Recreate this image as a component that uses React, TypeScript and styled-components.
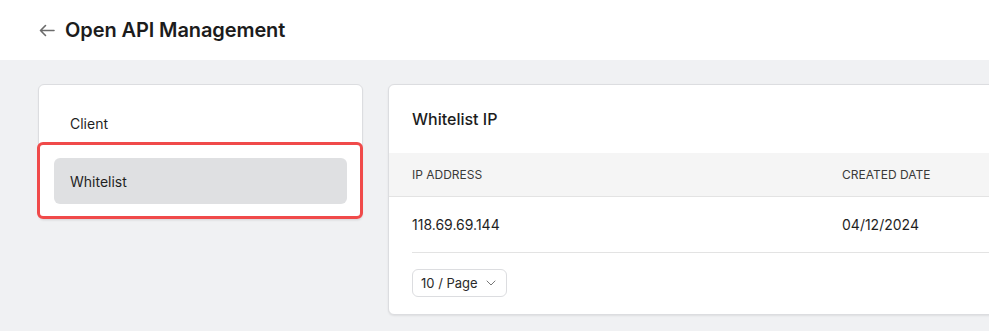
import React from 'react'
import styled, { createGlobalStyle } from 'styled-components'
import { ChevronDown } from 'lucide-react'

const GlobalStyle = createGlobalStyle`
  html, body {
    margin: 0;
    padding: 0;
    background: #f0f1f3;
    overflow: hidden;
  }
  body {
    font-family: Inter, "Liberation Sans", sans-serif;
    color: #1f1f1f;
  }
`

const menu = [
  { key: 'client', label: 'Client' },
  { key: 'whitelist', label: 'Whitelist' },
]

const rows = [{ ip: '118.69.69.144', created: '04/12/2024' }]

export default function App() {
  const active = 'whitelist'
  return (
    <>
      <GlobalStyle />
      <Page>
        <Header>
          <BackButton aria-label="Back">
            <svg width="16" height="13" viewBox="0 0 16 13" fill="none">
              <path
                d="M15 6.5H1.5M6.5 1.5L1.5 6.5L6.5 11.5"
                stroke="currentColor"
                strokeWidth="1.6"
                strokeLinecap="round"
                strokeLinejoin="round"
              />
            </svg>
          </BackButton>
          <Title>Open API Management</Title>
        </Header>
        <Body>
          <SideCard>
            {menu.map((m) => (
              <MenuItem key={m.key} $active={m.key === active}>
                {m.label}
                {m.key === active && <Highlight />}
              </MenuItem>
            ))}
          </SideCard>
          <MainCard>
            <CardTitle>Whitelist IP</CardTitle>
            <HeadRow>
              <span>IP Address</span>
              <span>Created Date</span>
            </HeadRow>
            {rows.map((r) => (
              <DataRow key={r.ip}>
                <span>{r.ip}</span>
                <span>{r.created}</span>
              </DataRow>
            ))}
            <Footer>
              <PageSelect>
                10 / Page
                <ChevronDown size={16} strokeWidth={1.5} color="#777" />
              </PageSelect>
            </Footer>
          </MainCard>
        </Body>
      </Page>
    </>
  )
}

const Page = styled.div`
  min-height: 331px;
  width: 1200px;
`

const Header = styled.header`
  height: 60px;
  background: #fff;
  display: flex;
  align-items: center;
  gap: 10px;
  padding-left: 39px;
`

const BackButton = styled.span`
  display: flex;
  align-items: center;
  color: #6b6b6b;
  margin-top: 1px;
`

const Title = styled.h1`
  margin: 0;
  font-size: 20px;
  font-weight: 600;
  color: #1c1c1c;
  letter-spacing: -0.1px;
`

const Body = styled.div`
  display: flex;
  align-items: flex-start;
  gap: 25px;
  padding: 24px 0 0 38px;
`

const SideCard = styled.nav`
  width: 325px;
  box-sizing: border-box;
  background: #fff;
  border: 1px solid #dcdde0;
  border-radius: 6px;
  padding: 15px;
  display: flex;
  flex-direction: column;
  gap: 12px;
  box-shadow: 0 1px 2px rgba(0, 0, 0, 0.06);
`

const MenuItem = styled.div<{ $active?: boolean }>`
  position: relative;
  height: 46px;
  display: flex;
  align-items: center;
  padding-left: 16px;
  border-radius: 6px;
  font-size: 14px;
  color: #1f1f1f;
  background: ${(p) => (p.$active ? '#dfe0e2' : 'transparent')};
`

const Highlight = styled.span`
  position: absolute;
  top: -16px;
  left: -17px;
  right: -16px;
  bottom: -15px;
  border: 3px solid #f04a4a;
  border-radius: 6px;
  pointer-events: none;
`

const MainCard = styled.section`
  width: 760px;
  background: #fff;
  border: 1px solid #dcdde0;
  border-radius: 6px;
  box-shadow: 0 1px 2px rgba(0, 0, 0, 0.08);
`

const CardTitle = styled.h2`
  margin: 0;
  height: 68px;
  display: flex;
  align-items: center;
  padding-left: 23px;
  font-size: 16px;
  font-weight: 500;
  color: #1c1c1c;
`

const HeadRow = styled.div`
  display: grid;
  grid-template-columns: 430px 1fr;
  align-items: center;
  height: 43px;
  padding-left: 23px;
  background: #f5f5f5;
  border-bottom: 1px solid #e3e3e3;
  font-size: 12px;
  text-transform: uppercase;
  color: #3a3a3a;
`

const DataRow = styled.div`
  display: grid;
  grid-template-columns: 430px 1fr;
  align-items: center;
  height: 55px;
  margin-left: 23px;
  border-bottom: 1px solid #e3e3e3;
  font-size: 14px;
  color: #1f1f1f;
`

const Footer = styled.div`
  padding: 16px 23px 17px;
`

const PageSelect = styled.div`
  display: inline-flex;
  align-items: center;
  gap: 5px;
  height: 28px;
  box-sizing: border-box;
  padding: 0 7px 0 8px;
  border: 1px solid #dcdde0;
  border-radius: 6px;
  font-size: 13px;
  color: #2a2a2a;
`
